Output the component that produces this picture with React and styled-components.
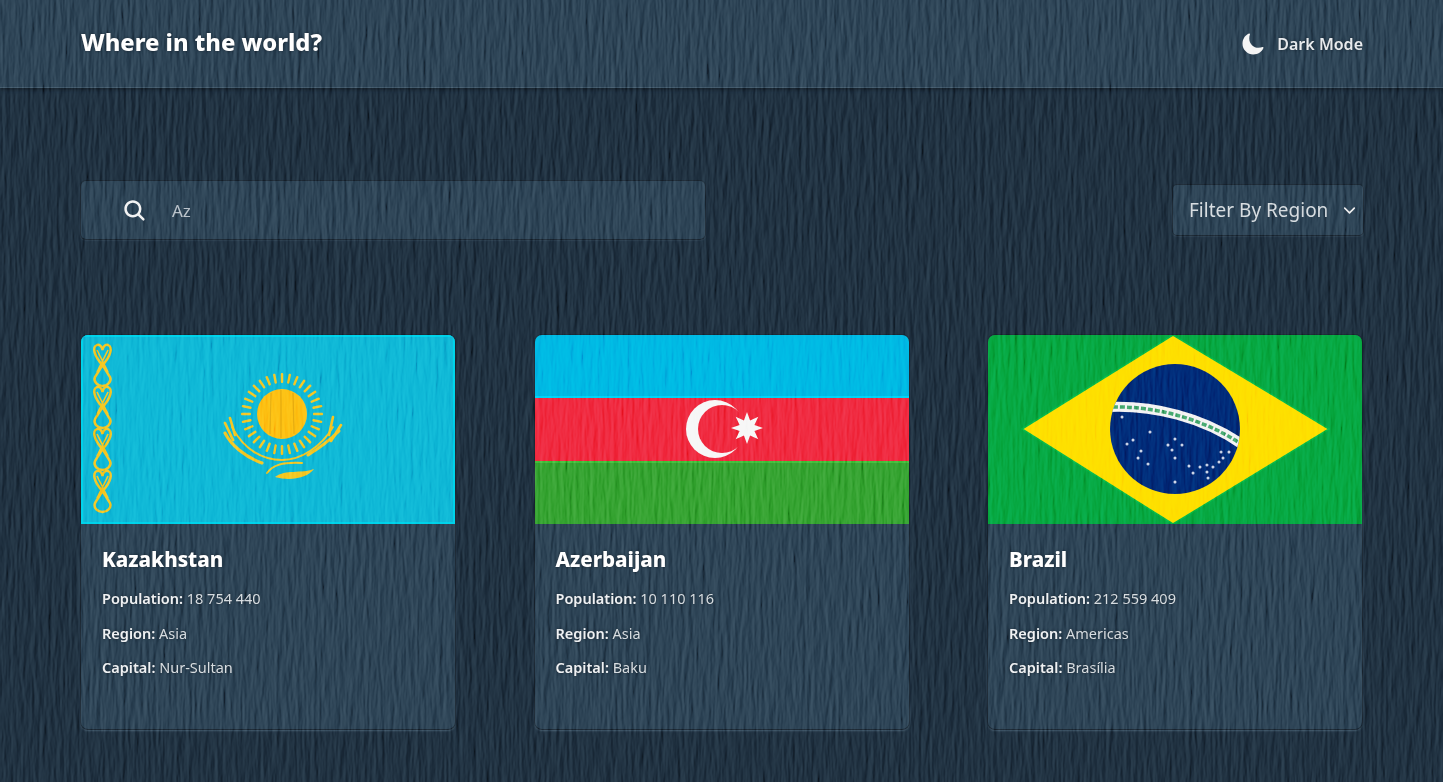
import React from "react";
import styled, { createGlobalStyle } from "styled-components";
import { IoChevronDown, IoMoon, IoSearch } from "react-icons/io5";

const FONT = `"Noto Sans", "Open Sans", sans-serif`;

const textureSvg = `<svg xmlns='http://www.w3.org/2000/svg' width='1443' height='782'><filter id='n' x='0' y='0' width='100%' height='100%'><feTurbulence type='fractalNoise' baseFrequency='0.24 0.03' numOctaves='4' seed='7'/><feDiffuseLighting surfaceScale='0.8' lighting-color='#fff'><feDistantLight azimuth='20' elevation='20'/></feDiffuseLighting></filter><rect width='1443' height='782' filter='url(#n)'/></svg>`;

const GlobalStyle = createGlobalStyle`
  html, body {
    margin: 0;
    height: 100%;
    background: #1a2a39;
    overflow: hidden;
  }
  body {
    font-family: ${FONT};
    color: #fff;
  }
  * {
    box-sizing: border-box;
  }
`;

const Page = styled.div`
  position: relative;
  height: 782px;
  overflow: hidden;
  background: #1a2a39;
`;

const Texture = styled.div`
  position: absolute;
  inset: 0;
  pointer-events: none;
  background-image: url("data:image/svg+xml,${encodeURIComponent(textureSvg)}");
  mix-blend-mode: soft-light;
  opacity: 0.6;
`;

const Header = styled.header`
  display: flex;
  justify-content: space-between;
  align-items: center;
  height: 87px;
  padding: 0 80px 4px 81px;
  background: #263c4e;
  box-shadow: 0 1px 0 #3a5163, 0 3px 3px #111b25;
`;

const Title = styled.h1`
  margin: 0;
  font-size: 23.7px;
  font-weight: 800;
  text-shadow: 0 0 3px #15202b;
`;

const ThemeToggle = styled.button`
  display: flex;
  align-items: center;
  gap: 12px;
  margin-top: 4px;
  padding: 0;
  border: 0;
  background: none;
  color: #e6e9ec;
  font-family: ${FONT};
  font-size: 16px;
  font-weight: 600;
  text-shadow: 0 0 3px #15202b;

  svg {
    width: 24px;
    height: 24px;
    color: #f4f4f4;
  }
`;

const Main = styled.main`
  padding: 94px 80px 0 81px;
`;

const Toolbar = styled.div`
  display: flex;
  justify-content: space-between;
  align-items: center;
  height: 58px;
`;

const SearchBox = styled.label`
  display: flex;
  align-items: center;
  gap: 23px;
  width: 624px;
  height: 58px;
  padding-left: 41px;
  border-radius: 5px;
  background: #263c4e;
  box-shadow: 0 0 0 1px #17222d, 0 1px 2px #3a5163;

  svg {
    flex: none;
    width: 25px;
    height: 25px;
    color: #f2f2f2;
  }
`;

const SearchInput = styled.input`
  flex: 1;
  min-width: 0;
  border: 0;
  outline: 0;
  background: none;
  color: #b7c0c8;
  font-family: ${FONT};
  font-size: 17px;
`;

const RegionFilter = styled.div`
  display: flex;
  align-items: center;
  justify-content: space-between;
  width: 190px;
  height: 50px;
  padding: 0 5px 0 16px;
  border-radius: 4px;
  background: #263c4e;
  box-shadow: 0 0 0 1px #17222d, 0 1px 2px #3a5163;
  color: #d4dade;
  font-size: 19px;
  font-weight: 400;

  svg {
    width: 17px;
    height: 17px;
    color: #eee;
  }
`;

const CardGrid = styled.section`
  display: grid;
  grid-template-columns: repeat(3, 374px);
  justify-content: space-between;
  margin-top: 96px;
  padding-right: 1px;
`;

const Card = styled.article`
  height: 394px;
  overflow: hidden;
  border-radius: 7px;
  background: #263c4e;
  box-shadow: 0 0 0 1px #17222d, 0 2px 2px #3a5163;
`;

const Flag = styled.svg`
  display: block;
  width: 374px;
  height: 189px;
`;

const CardBody = styled.div`
  padding: 21px 21px;
`;

const CountryName = styled.h2`
  margin: 0 0 16px;
  font-size: 20.5px;
  line-height: 28px;
  font-weight: 800;
  text-shadow: 0 0 3px #15202b;
`;

const Fact = styled.p`
  margin: 0 0 16.5px;
  font-size: 14.5px;
  line-height: 18px;
  font-weight: 400;
  color: #d4dade;
  text-shadow: 0 0 3px #15202b;

  b {
    font-weight: 600;
    color: #eef0f2;
  }
`;

const KazakhstanFlag = () => {
  const rays = Array.from({ length: 32 }, (_, i) => (i * 360) / 32);
  return (
    <Flag viewBox="0 0 374 189">
      <rect width="374" height="189" fill="#0cb4d4" />
      <rect x="1" y="1" width="372" height="187" fill="none" stroke="#00cfe8" strokeWidth="2" />
      <g fill="none" stroke="#f4c41c" strokeWidth="2.4">
        {[9, 51, 93, 135].map(y => (
          <g key={y} transform={`translate(11 ${y})`}>
            <path d="M10.5 21 C2 12 0 3 5 1 C8 0 10 3 10.5 6 C11 3 13 0 16 1 C21 3 19 12 10.5 21Z" />
            <path d="M10.5 21 L3 33 C1 38 6 42 10.5 42 C15 42 20 38 18 33Z" />
            <path d="M5 6 L16 28 M16 6 L5 28" strokeWidth="1.6" />
          </g>
        ))}
      </g>
      <g fill="#f4c41c">
        {rays.map(angle => (
          <rect
            key={angle}
            x="199.8"
            y="38"
            width="2.4"
            height="10"
            rx="1"
            transform={`rotate(${angle} 201 79)`}
          />
        ))}
        <circle cx="201" cy="79" r="25" fill="#fdbd0f" />
      </g>
      <path
        d="M200 55 V103 M190 58 L189 99 M212 58 L213 99"
        stroke="#e3a60d"
        strokeWidth="1.2"
        fill="none"
      />
      <g fill="none" stroke="#f4c41c" strokeLinecap="round">
        <path d="M144 98 C150 110 164 122 181 128" strokeWidth="3" />
        <path d="M151 92 C163 115 182 125 201 125 C220 125 240 112 252 92" strokeWidth="1.8" />
        <path d="M186 138 C192 130 201 127 221 128" strokeWidth="2" />
        <path d="M227 120 C240 112 250 104 258 96" strokeWidth="3" />
        <path d="M149 83 L154 100 M144 88 L152 105 M252 82 L248 100 M260 90 L250 106" strokeWidth="2.6" />
      </g>
      <path d="M194 142 C205 134 220 139 233 134 C225 144 208 146 194 142Z" fill="#f4c41c" />
    </Flag>
  );
};

const starPoints = (cx, cy, outer, inner, count) =>
  Array.from({ length: count * 2 }, (_, i) => {
    const r = i % 2 ? inner : outer;
    const a = (i * Math.PI) / count - Math.PI / 2;
    return `${cx + r * Math.cos(a)},${cy + r * Math.sin(a)}`;
  }).join(" ");

const AzerbaijanFlag = () => (
  <Flag viewBox="0 0 374 189">
    <rect width="374" height="63" fill="#00b5e2" />
    <rect y="61" width="374" height="2" fill="#00d0f5" />
    <rect y="63" width="374" height="63" fill="#ef2338" />
    <rect y="126" width="374" height="63" fill="#2e9e2a" />
    <rect y="126" width="374" height="2" fill="#3cb934" />
    <circle cx="180" cy="94" r="29" fill="#f6f6f6" />
    <circle cx="187" cy="94" r="24" fill="#ef2338" />
    <polygon points={starPoints(212, 93, 16, 8, 8)} fill="#f6f6f6" />
  </Flag>
);

const BRAZIL_STARS = [
  [134, 82], [162, 97], [145, 105], [139, 109], [153, 116], [150, 123],
  [160, 129], [187, 104], [180, 110], [194, 110], [184, 115], [187, 123],
  [201, 131], [205, 138], [212, 132], [219, 130], [225, 132], [231, 127],
  [235, 123], [233, 117], [241, 117], [219, 137], [220, 143], [187, 147],
];

const BrazilFlag = () => (
  <Flag viewBox="0 0 374 189">
    <rect width="374" height="189" fill="#05a33a" />
    <polygon points="34,94 185,0 341,94 185,189" fill="#fedd00" stroke="#04b53f" strokeWidth="1.5" />
    <clipPath id="globe">
      <circle cx="187" cy="94" r="65" />
    </clipPath>
    <circle cx="187" cy="94" r="65" fill="#012472" />
    <g clipPath="url(#globe)" fill="none">
      <path d="M120 72 C165 70 215 82 255 110" stroke="#f2f2f2" strokeWidth="10" />
      <path d="M125 72 C165 71 213 83 250 107" stroke="#3fa56a" strokeWidth="3.5" strokeDasharray="5 2" />
    </g>
    <g fill="#c9d3e6">
      {BRAZIL_STARS.map(([x, y]) => (
        <circle key={`${x}-${y}`} cx={x} cy={y} r="1.5" />
      ))}
    </g>
  </Flag>
);

const COUNTRIES = [
  { name: "Kazakhstan", population: "18 754 440", region: "Asia", capital: "Nur-Sultan", Flag: KazakhstanFlag },
  { name: "Azerbaijan", population: "10 110 116", region: "Asia", capital: "Baku", Flag: AzerbaijanFlag },
  { name: "Brazil", population: "212 559 409", region: "Americas", capital: "Brasília", Flag: BrazilFlag },
];

const App = () => (
  <Page>
    <GlobalStyle />
    <Header>
      <Title>Where in the world?</Title>
      <ThemeToggle>
        <IoMoon />
        Dark Mode
      </ThemeToggle>
    </Header>
    <Main>
      <Toolbar>
        <SearchBox>
          <IoSearch />
          <SearchInput defaultValue="Az" />
        </SearchBox>
        <RegionFilter>
          Filter By Region
          <IoChevronDown />
        </RegionFilter>
      </Toolbar>
      <CardGrid>
        {COUNTRIES.map(country => (
          <Card key={country.name}>
            <country.Flag />
            <CardBody>
              <CountryName>{country.name}</CountryName>
              <Fact><b>Population:</b> {country.population}</Fact>
              <Fact><b>Region:</b> {country.region}</Fact>
              <Fact><b>Capital:</b> {country.capital}</Fact>
            </CardBody>
          </Card>
        ))}
      </CardGrid>
    </Main>
    <Texture />
  </Page>
);

export default App;
